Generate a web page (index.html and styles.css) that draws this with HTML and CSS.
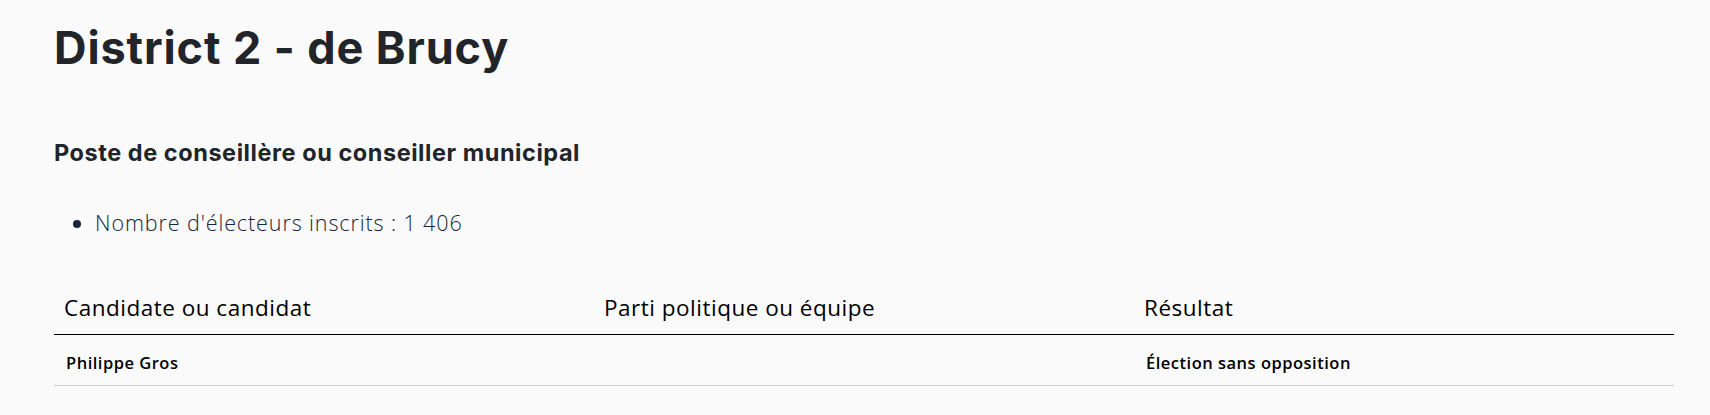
FILE: index.html
```html
<!DOCTYPE html>
<html lang="fr">
<head>
  <meta charset="utf-8">
  <title>District 2 - de Brucy</title>
  <link rel="stylesheet" href="styles.css">
</head>
<body>
  <div class="container">
    <h1>District 2 - de Brucy</h1>

    <h2>Poste de conseillère ou conseiller municipal</h2>
    <ul class="infos">
      <li>Nombre d'électeurs inscrits : 1 406</li>
    </ul>

    <table class="resultats">
      <thead>
        <tr>
          <th>Candidate ou candidat</th>
          <th>Parti politique ou équipe</th>
          <th>Résultat</th>
        </tr>
      </thead>
      <tbody>
        <tr>
          <td>Philippe Gros</td>
          <td></td>
          <td>Élection sans opposition</td>
        </tr>
      </tbody>
    </table>
  </div>
</body>
</html>
```

FILE: styles.css
```css
body {
  margin: 0;
  font-family: "Open Sans", Lato, sans-serif;
  background-color: #fafafa;
  color: #212529;
}

.container {
  padding: 21px 36px 0 54px;
}

h1 {
  font-family: Inter, sans-serif;
  font-size: 45px;
  font-weight: 700;
  letter-spacing: 0.9px;
  line-height: 54px;
  margin: 0 0 64px;
}

h2 {
  font-family: Inter, sans-serif;
  font-size: 23.5px;
  font-weight: 700;
  letter-spacing: 0.55px;
  line-height: 28px;
  margin: 0 0 42px;
}

.infos {
  margin: 0 0 47px;
  padding-left: 41px;
  font-size: 21.5px;
  font-weight: 300;
  letter-spacing: 0.9px;
  line-height: 28px;
  color: #15233b;
}

.resultats {
  width: 100%;
  table-layout: fixed;
  border-collapse: collapse;
  color: #000;
}

.resultats th {
  text-align: left;
  font-size: 22.5px;
  font-weight: 500;
  letter-spacing: 0.5px;
  line-height: 28px;
  padding: 10px 10px 12px;
  border-bottom: 1px solid #000;
}

.resultats td {
  font-size: 16.5px;
  font-weight: 600;
  letter-spacing: 0.5px;
  line-height: 22px;
  padding: 17px 12px 11px;
  border-bottom: 1px solid #ccc;
}
```
